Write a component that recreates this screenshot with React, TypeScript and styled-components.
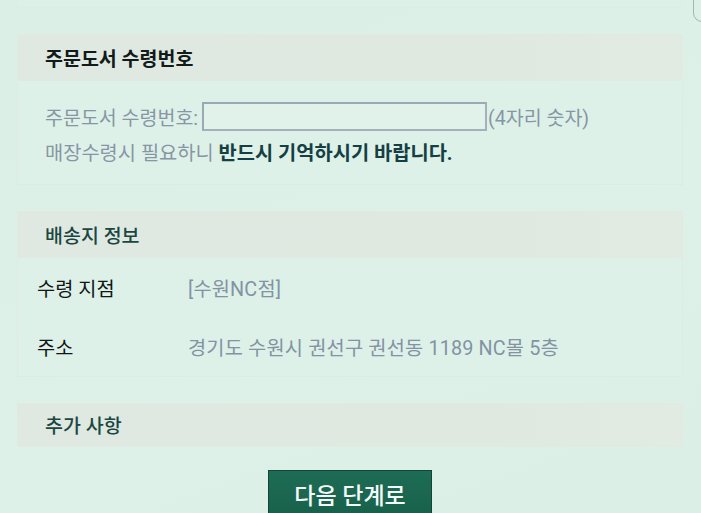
import styled, { createGlobalStyle } from "styled-components";

const GlobalStyle = createGlobalStyle`
  *, *::before, *::after {
    box-sizing: border-box;
  }
  html, body {
    margin: 0;
    padding: 0;
    background: linear-gradient(160deg, #dbefe6 0%, #ddf1e9 60%, #dbefe6 100%);
    font-family: Roboto, "Noto Sans CJK KR", sans-serif;
    overflow: hidden;
  }
`;

const Page = styled.div`
  position: relative;
  height: 513px;
  padding: 0 18px 0 17px;
  overflow: hidden;
`;

const Column = styled.div`
  display: flex;
  flex-direction: column;
  gap: 26px;
`;

const PrevCard = styled.div`
  height: 8px;
  border: 1px solid #e2ebe3;
  border-top: none;
  background: #ddf0e8;
`;

const Widget = styled.div`
  position: absolute;
  top: -20px;
  left: 693px;
  width: 40px;
  height: 42px;
  border: 1px solid #a9b3b0;
  border-radius: 9px;
`;

const Card = styled.section`
  border: 1px solid #e1eae2;
  background: #ddf1e8;
`;

const CardHeader = styled.div<{ $h: number }>`
  display: flex;
  align-items: center;
  height: ${(p) => p.$h}px;
  padding: 0 0 2px 27px;
  background: linear-gradient(90deg, #dfe9e1 0%, #dfe9e0 70%, #e1ebe2 100%);
`;

const CardTitle = styled.h2<{ $dark?: boolean }>`
  margin: 0;
  font-size: 19.5px;
  font-weight: ${(p) => (p.$dark ? 700 : 500)};
  color: ${(p) => (p.$dark ? "#121a1a" : "#1b4742")};
`;

const Body = styled.div`
  padding: 20px 0 17px 27px;
`;

const InputRow = styled.div`
  display: flex;
  align-items: center;
  height: 30px;
  font-size: 19.5px;
  color: #8796a4;
  white-space: nowrap;
`;

const CodeInput = styled.input`
  flex: none;
  width: 285px;
  height: 29px;
  margin: 0 1px 0 4px;
  border: 2px solid #9ba9b4;
  border-right-color: #a4b1bb;
  border-bottom-color: #a4b1bb;
  background: #e0f2ea;
  outline: none;
`;

const Notice = styled.p`
  margin: 10px 0 0;
  line-height: 26px;
  font-size: 19.8px;
  color: #8796a4;
  white-space: nowrap;
`;

const Strong = styled.b`
  color: #163f43;
  font-weight: 700;
`;

const InfoRow = styled.div`
  display: grid;
  grid-template-columns: 151px 1fr;
  align-items: center;
  height: 59px;
  padding-left: 19px;
  font-size: 19.8px;
`;

const Label = styled.span`
  color: #111616;
`;

const Value = styled.span`
  color: #8393a3;
  letter-spacing: 0.15px;
`;

const Actions = styled.div`
  display: flex;
  justify-content: center;
  margin-top: -3px;
`;

const NextButton = styled.button`
  width: 164px;
  height: 52px;
  padding: 0 0 4px;
  border: 1px solid #0f4638;
  background: linear-gradient(180deg, #1e6c55 0%, #17604a 100%);
  color: #f4fbf8;
  font-family: Roboto, "Noto Sans CJK KR", sans-serif;
  font-size: 23px;
  font-weight: 500;
  cursor: pointer;
`;

export default function App() {
  return (
    <>
      <GlobalStyle />
      <Page>
        <Widget />
        <Column>
          <PrevCard />

          <Card>
            <CardHeader $h={46}>
              <CardTitle $dark>주문도서 수령번호</CardTitle>
            </CardHeader>
            <Body>
              <InputRow>
                주문도서 수령번호:
                <CodeInput type="text" maxLength={4} />
                (4자리 숫자)
              </InputRow>
              <Notice>
                매장수령시 필요하니 <Strong>반드시 기억하시기 바랍니다.</Strong>
              </Notice>
            </Body>
          </Card>

          <Card>
            <CardHeader $h={46}>
              <CardTitle>배송지 정보</CardTitle>
            </CardHeader>
            <InfoRow>
              <Label>수령 지점</Label>
              <Value>[수원NC점]</Value>
            </InfoRow>
            <InfoRow>
              <Label>주소</Label>
              <Value>경기도 수원시 권선구 권선동 1189 NC몰 5층</Value>
            </InfoRow>
          </Card>

          <Card>
            <CardHeader $h={42}>
              <CardTitle>추가 사항</CardTitle>
            </CardHeader>
          </Card>

          <Actions>
            <NextButton type="button">다음 단계로</NextButton>
          </Actions>
        </Column>
      </Page>
    </>
  );
}
